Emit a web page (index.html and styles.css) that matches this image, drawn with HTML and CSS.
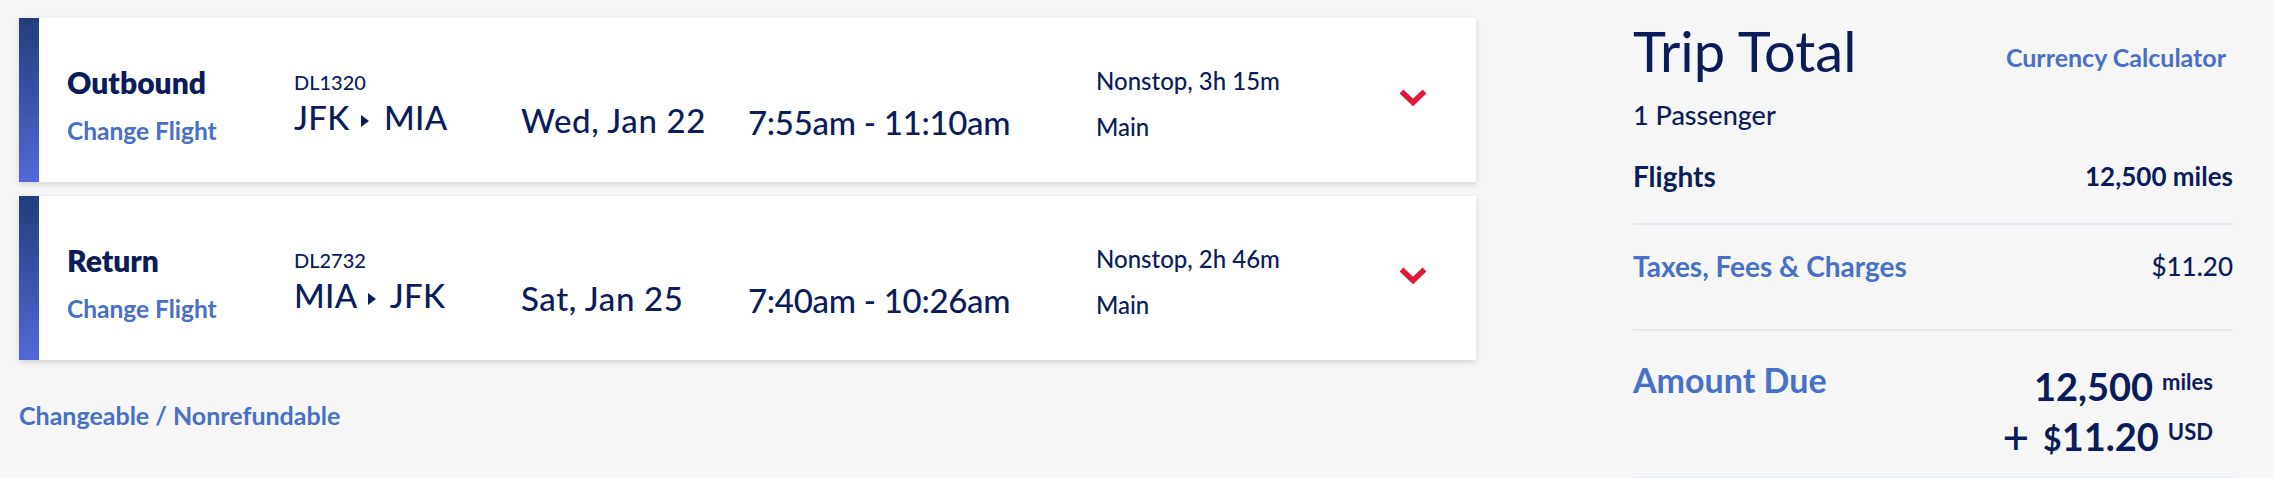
FILE: index.html
```html
<!DOCTYPE html>
<html lang="en">
<head>
<meta charset="utf-8">
<title>Trip Summary</title>
<link rel="stylesheet" href="styles.css">
</head>
<body>
<main class="page">
  <section class="flights">
    <article class="card">
      <div class="card-bar"></div>
      <div class="card-body">
        <div class="col col-label">
          <div class="leg">Outbound</div>
          <a class="link change">Change Flight</a>
        </div>
        <div class="col col-route">
          <div class="flight-no">DL1320</div>
          <div class="big route">JFK <span class="tri"></span> MIA</div>
        </div>
        <div class="col col-date"><div class="big date">Wed, Jan 22</div></div>
        <div class="col col-time"><div class="big time">7:55am - 11:10am</div></div>
        <div class="col col-detail">
          <div class="detail">Nonstop, 3h 15m</div>
          <div class="detail cabin">Main</div>
        </div>
        <div class="col col-chev">
          <svg class="chev" width="28" height="17" viewBox="0 0 28 17"><polyline points="2.5,2.5 14,13.5 25.5,2.5" fill="none" stroke="#e01a3b" stroke-width="5.5"/></svg>
        </div>
      </div>
    </article>
    <article class="card">
      <div class="card-bar"></div>
      <div class="card-body">
        <div class="col col-label">
          <div class="leg">Return</div>
          <a class="link change">Change Flight</a>
        </div>
        <div class="col col-route">
          <div class="flight-no">DL2732</div>
          <div class="big route">MIA <span class="tri"></span> JFK</div>
        </div>
        <div class="col col-date"><div class="big date">Sat, Jan 25</div></div>
        <div class="col col-time"><div class="big time">7:40am - 10:26am</div></div>
        <div class="col col-detail">
          <div class="detail">Nonstop, 2h 46m</div>
          <div class="detail cabin">Main</div>
        </div>
        <div class="col col-chev">
          <svg class="chev" width="28" height="17" viewBox="0 0 28 17"><polyline points="2.5,2.5 14,13.5 25.5,2.5" fill="none" stroke="#e01a3b" stroke-width="5.5"/></svg>
        </div>
      </div>
    </article>
    <a class="link fare-rule">Changeable / Nonrefundable</a>
  </section>

  <aside class="summary">
    <div class="summary-head">
      <h2 class="title">Trip Total</h2>
      <a class="link calc">Currency Calculator</a>
    </div>
    <div class="passengers">1 Passenger</div>
    <div class="row row-flights">
      <span class="row-label strong">Flights</span>
      <span class="row-value strong">12,500 miles</span>
    </div>
    <div class="row row-taxes">
      <a class="link row-label">Taxes, Fees &amp; Charges</a>
      <span class="row-value">$11.20</span>
    </div>
    <div class="row row-due">
      <span class="link due-label">Amount Due</span>
      <div class="due-amount">
        <div class="due-line">12,500<span class="unit">miles</span></div>
        <div class="due-line"><span class="plus">+</span><span class="dollar">$</span>11.20<span class="unit">USD</span></div>
      </div>
    </div>
  </aside>
</main>
</body>
</html>
```

FILE: styles.css
```css
* { box-sizing: border-box; }

html, body {
  margin: 0;
  padding: 0;
}

body {
  background: #f6f6f6;
  font-family: "Lato", "Liberation Sans", sans-serif;
  font-weight: 500;
  color: #0c1c5b;
}

.page {
  display: flex;
  align-items: flex-start;
  gap: 157px;
  padding: 18px 0 0 19px;
}

.link {
  color: #4770c7;
  font-weight: 700;
  text-decoration: none;
}

/* ---------- flight cards ---------- */
.flights {
  width: 1457px;
  display: flex;
  flex-direction: column;
  gap: 14px;
}

.card {
  display: flex;
  height: 164px;
  background: #ffffff;
  box-shadow: 0 2px 6px rgba(0, 0, 0, 0.14);
}

.card-bar {
  width: 20px;
  flex: none;
  background: linear-gradient(180deg, #213e7a 0%, #5169d8 100%);
}

.card-body {
  flex: 1;
  display: flex;
  align-items: flex-start;
  padding-left: 28px;
}

.col { flex: none; }
.col-label { width: 227px; padding-top: 46px; }
.col-route { width: 227px; padding-top: 52px; }
.col-date { width: 227px; padding-top: 79px; }
.col-time { width: 348px; padding-top: 80px; }
.col-detail { width: 303px; padding-top: 48px; }
.col-chev { width: 28px; padding-top: 71px; }

.leg {
  font-size: 30px;
  font-weight: 800;
  line-height: 36px;
}

.change {
  display: block;
  margin-top: 16px;
  font-size: 24.5px;
  line-height: 30px;
}

.flight-no {
  font-size: 20px;
  line-height: 24px;
}

.big {
  margin-top: 3px;
  font-size: 33px;
  line-height: 40px;
  white-space: nowrap;
}

.route { letter-spacing: 0.3px; }
.date { letter-spacing: 0.6px; }

.time {
  font-size: 33px;
  letter-spacing: -0.3px;
  margin-top: 4px;
}

.tri {
  display: inline-block;
  width: 0;
  height: 0;
  border-top: 6.5px solid transparent;
  border-bottom: 6.5px solid transparent;
  border-left: 8px solid #0c1c5b;
  margin: 0 6px 0 3px;
  vertical-align: 3px;
}

.detail {
  font-size: 24px;
  line-height: 30px;
  white-space: nowrap;
}

.cabin { margin-top: 16px; }

.chev { display: block; }

.fare-rule {
  display: block;
  margin-top: 26px;
  font-size: 25px;
  line-height: 30px;
}

/* ---------- summary ---------- */
.summary {
  width: 600px;
  flex: none;
}

.summary-head {
  display: flex;
  justify-content: space-between;
  align-items: flex-start;
}

.title {
  margin: 1px 0 0;
  font-size: 56px;
  font-weight: 400;
  line-height: 64px;
}

.calc {
  margin: 24px 7px 0 0;
  font-size: 25px;
  line-height: 30px;
}

.passengers {
  margin-top: 16px;
  font-size: 27px;
  line-height: 32px;
}

.row {
  display: flex;
  justify-content: space-between;
  align-items: flex-start;
  border-bottom: 2px solid #e3e8f3;
  line-height: 32px;
}

.row-label { font-size: 28px; }
.row-value { font-size: 26px; }
.strong { font-weight: 700; }

.row-flights { padding: 29px 0 31px; }
.row-taxes { padding: 25px 0 47px; }
.row-due { padding: 28px 0 15px; }

.due-label {
  margin-top: 2px;
  font-size: 34px;
  line-height: 38px;
}

.due-amount {
  padding-right: 20px;
  text-align: right;
}

.due-line {
  font-size: 38px;
  font-weight: 700;
  line-height: 46px;
  white-space: nowrap;
}

.unit {
  margin-left: 9px;
  font-size: 22px;
  vertical-align: 11px;
}

.plus {
  font-size: 46px;
  font-weight: 500;
  vertical-align: -3px;
  margin-right: 14px;
}

.dollar {
  font-size: 32px;
}
```
